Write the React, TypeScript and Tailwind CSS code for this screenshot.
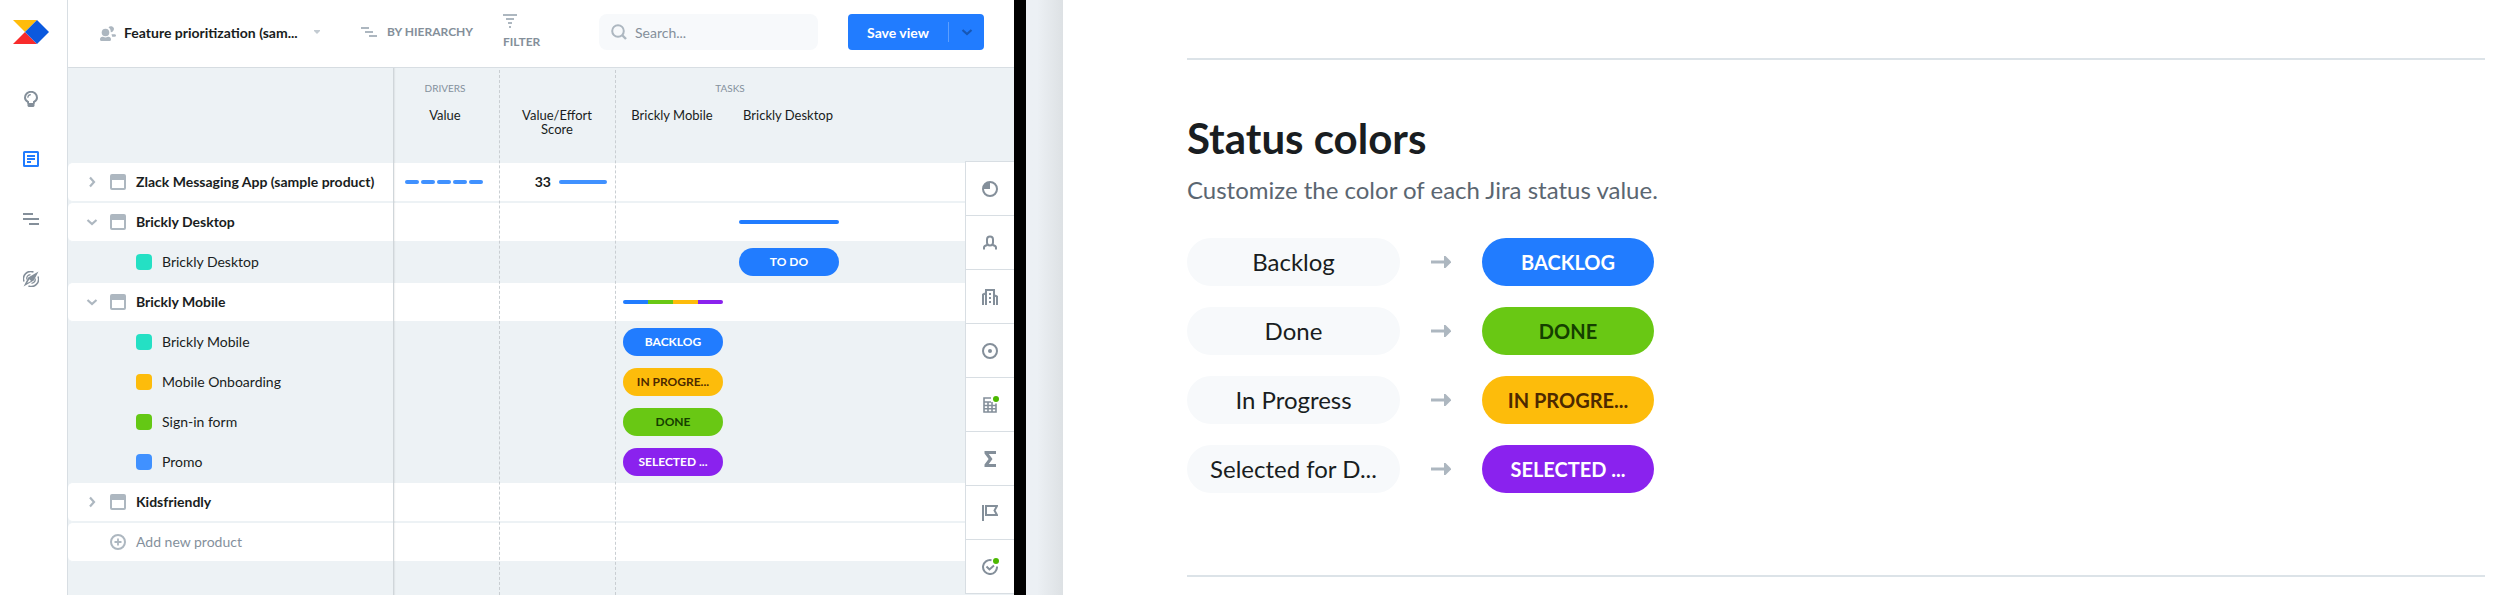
import type { ReactNode } from "react";
import clsx from "clsx";

interface Status {
  name: string;
  short: string;
  label: string;
  className: string;
}

interface Row {
  name: string;
  kind: "product" | "feature" | "add";
  open?: boolean;
  swatch?: string;
  value?: ReactNode;
  score?: ReactNode;
  mobile?: ReactNode;
  desktop?: ReactNode;
}

const statuses: Status[] = [
  { name: "Backlog", short: "Backlog", label: "BACKLOG", className: "bg-[#217cff] text-white" },
  { name: "Done", short: "Done", label: "DONE", className: "bg-[#69c814] text-[#153f00]" },
  { name: "In Progress", short: "In Progress", label: "IN PROGRE...", className: "bg-[#fdbc0b] text-[#4d2900]" },
  { name: "Selected for Development", short: "Selected for D...", label: "SELECTED ...", className: "bg-[#8a22ee] text-white" },
];

function Pill({ className, children }: { className: string; children: ReactNode }) {
  return (
    <button
      className={clsx(
        "block w-[100px] h-7 rounded-full text-[12px] leading-7 font-bold text-center whitespace-nowrap",
        className
      )}
    >
      {children}
    </button>
  );
}

function Progress({ colors }: { colors: string[] }) {
  return (
    <div className="flex w-[100px] h-1 rounded-full overflow-hidden">
      {colors.map((color) => (
        <span key={color} className={clsx("flex-1", color)} />
      ))}
    </div>
  );
}

const rows: Row[] = [
  {
    name: "Zlack Messaging App (sample product)",
    kind: "product",
    value: (
      <div className="flex gap-0.5 pl-[11px]">
        {[1, 2, 3, 4, 5].map((i) => (
          <span key={i} className="w-3.5 h-1 rounded-full bg-[#4091ff]" />
        ))}
      </div>
    ),
    score: (
      <div className="flex items-center justify-end gap-2 pr-[9px]">
        <span className="text-[14px] font-bold">33</span>
        <span className="w-12 h-1 rounded-full bg-[#4091ff]" />
      </div>
    ),
  },
  { name: "Brickly Desktop", kind: "product", open: true, desktop: <Progress colors={["bg-[#217cff]"]} /> },
  {
    name: "Brickly Desktop",
    kind: "feature",
    swatch: "bg-[#24e0c4]",
    desktop: <Pill className={statuses[0].className}>TO DO</Pill>,
  },
  {
    name: "Brickly Mobile",
    kind: "product",
    open: true,
    mobile: <Progress colors={["bg-[#217cff]", "bg-[#69c814]", "bg-[#fdbc0b]", "bg-[#8a22ee]"]} />,
  },
  {
    name: "Brickly Mobile",
    kind: "feature",
    swatch: "bg-[#24e0c4]",
    mobile: <Pill className={statuses[0].className}>BACKLOG</Pill>,
  },
  {
    name: "Mobile Onboarding",
    kind: "feature",
    swatch: "bg-[#fdbc0b]",
    mobile: <Pill className={statuses[2].className}>IN PROGRE...</Pill>,
  },
  {
    name: "Sign-in form",
    kind: "feature",
    swatch: "bg-[#64c814]",
    mobile: <Pill className={statuses[1].className}>DONE</Pill>,
  },
  {
    name: "Promo",
    kind: "feature",
    swatch: "bg-[#4091ff]",
    mobile: <Pill className={statuses[3].className}>SELECTED ...</Pill>,
  },
  { name: "Kidsfriendly", kind: "product" },
  { name: "Add new product", kind: "add" },
];

function Icon({ children, className }: { children: ReactNode; className?: string }) {
  return (
    <svg viewBox="0 0 16 16" fill="none" className={clsx("w-4 h-4 shrink-0", className)} aria-hidden="true">
      {children}
    </svg>
  );
}

const navItems = [
  {
    label: "Insights",
    active: false,
    icon: (
      <Icon>
        <path d="M5 12.5v-1.6C3 9.8 2 8.600 2 6.800a6 6 0 0 1 12 0c0 1.800-1 3-3 4.100v1.600" stroke="currentColor" strokeWidth="2" />
        <path d="M4.500 12h7v3l-1 1h-5l-1-1z" fill="currentColor" />
        <path d="M4.800 6.800c0-1.700 1.200-3 3-3.100" stroke="currentColor" strokeWidth="1.200" />
      </Icon>
    ),
  },
  {
    label: "Features",
    active: true,
    icon: (
      <Icon>
        <rect x="1" y="1" width="14" height="14" rx="0.500" stroke="currentColor" strokeWidth="2" />
        <path d="M4 5h8M4 8h8M4 11h4" stroke="currentColor" strokeWidth="1.800" />
      </Icon>
    ),
  },
  {
    label: "Roadmap",
    active: false,
    icon: (
      <Icon>
        <path d="M0 3h10M0 8h16M6 13h10" stroke="currentColor" strokeWidth="2" />
      </Icon>
    ),
  },
  {
    label: "Portal",
    active: false,
    icon: (
      <Icon>
        <path d="M1 10.500A7.300 7.300 0 0 1 10.500 1M15 5.500A7.300 7.300 0 0 1 5.500 15" stroke="currentColor" strokeWidth="1.500" />
        <path d="M3.700 8.500A4.500 4.500 0 0 1 7.500 3.700M12.300 7.500A4.500 4.500 0 0 1 8.500 12.300" stroke="currentColor" strokeWidth="1.200" />
        <path
          fillRule="evenodd"
          d="M15.500 0.500 10.800 9.500 0.600 15.500 5.200 6.400zM6.400 8.300 4.200 12 8 9.900z"
          fill="currentColor"
        />
      </Icon>
    ),
  },
];

const railItems = [
  {
    label: "Drivers",
    dot: false,
    icon: (
      <Icon>
        <circle cx="8" cy="8" r="7" stroke="currentColor" strokeWidth="2" />
        <path d="M8 8H1a7 7 0 0 1 7-7z" fill="currentColor" />
      </Icon>
    ),
  },
  {
    label: "Users",
    dot: false,
    icon: (
      <Icon>
        <rect x="5" y="1.500" width="6" height="9" rx="3" stroke="currentColor" strokeWidth="2" />
        <path d="M2 14.500v-2c0-1.200 1-2 3.500-2.500M14 14.500v-2c0-1.200-1-2-3.500-2.500" stroke="currentColor" strokeWidth="2" />
      </Icon>
    ),
  },
  {
    label: "Companies",
    dot: false,
    icon: (
      <Icon>
        <path d="M4 16V1h8v15M1 16V5.500l2-1M15 16V7.500l-2-1" stroke="currentColor" strokeWidth="2" />
        <path d="M7 4h2v2H7zM7 8h2v2H7zM7 12h2v2H7z" fill="currentColor" />
      </Icon>
    ),
  },
  {
    label: "Objectives",
    dot: false,
    icon: (
      <Icon>
        <circle cx="8" cy="8" r="7" stroke="currentColor" strokeWidth="2" />
        <circle cx="8" cy="8" r="2" fill="currentColor" />
      </Icon>
    ),
  },
  {
    label: "Effort",
    dot: true,
    icon: (
      <Icon>
        <path d="M9 1H2v14h12V6.500M2 5h7M2 8.500h12M2 11.800h12M6 5v10M10 5v10" stroke="currentColor" strokeWidth="1.600" />
      </Icon>
    ),
  },
  {
    label: "Formulas",
    dot: false,
    icon: (
      <Icon>
        <path d="M2.500 0h11.500v3H6.800l3.700 5-3.700 5H14v3H2.500v-2.400L6.600 8 2.500 2.400z" fill="currentColor" />
      </Icon>
    ),
  },
  {
    label: "Releases",
    dot: false,
    icon: (
      <Icon>
        <path d="M1 0v16" stroke="currentColor" strokeWidth="2" />
        <path d="M4 1h11L12.500 5.500 15 10H4z" stroke="currentColor" strokeWidth="2" />
      </Icon>
    ),
  },
  {
    label: "Tasks",
    dot: true,
    icon: (
      <Icon>
        <path d="M9.500 1.200A7 7 0 1 0 15 7.500" stroke="currentColor" strokeWidth="2" />
        <path d="m4.500 7.500 3 3L12 6.500" stroke="currentColor" strokeWidth="2" />
      </Icon>
    ),
  },
];

function Chevron({ open }: { open?: boolean }) {
  return (
    <Icon className="text-[#adb7c0]">
      {open ? (
        <path d="m3.500 6 4.500 4 4.500-4" stroke="currentColor" strokeWidth="2.200" />
      ) : (
        <path d="m6 3.500 4 4.500-4 4.500" stroke="currentColor" strokeWidth="2.200" />
      )}
    </Icon>
  );
}

function RowName({ row }: { row: Row }) {
  if (row.kind === "feature") {
    return (
      <div className="flex items-center gap-2.5 pl-[68px]">
        <span className={clsx("w-4 h-4 rounded", row.swatch)} />
        <span>{row.name}</span>
      </div>
    );
  }
  if (row.kind === "add") {
    return (
      <button className="flex items-center gap-2.5 pl-[42px] text-[#84909c]">
        <Icon className="text-[#adb7c0]">
          <circle cx="8" cy="8" r="7" stroke="currentColor" strokeWidth="2" />
          <path d="M8 4.500v7M4.500 8h7" stroke="currentColor" strokeWidth="1.800" />
        </Icon>
        {row.name}
      </button>
    );
  }
  return (
    <div className="flex items-center pl-4">
      <button aria-label={row.open ? "Collapse" : "Expand"}>
        <Chevron open={row.open} />
      </button>
      <Icon className="ml-2.5 mr-2.5 text-[#adb7c0]">
        <rect x="1" y="1" width="14" height="14" rx="1" stroke="currentColor" strokeWidth="2" />
        <path d="M1 1h14v5H1z" fill="currentColor" />
      </Icon>
      <span className="font-bold whitespace-nowrap">{row.name}</span>
    </div>
  );
}

function Sidebar() {
  return (
    <nav className="w-[68px] shrink-0 border-r border-[#d8dee3] pt-5 pr-[5px] flex flex-col items-center">
      <a href="#" aria-label="Home">
        <svg viewBox="0 0 36 24" className="w-9 h-6" aria-hidden="true">
          <path d="M0 0h24L12 12z" fill="#ffbc0b" />
          <path d="M0 24h24L12 12z" fill="#f82b2b" />
          <path d="M24 0 36 12 24 24 12 12z" fill="#0b59de" />
        </svg>
      </a>
      <div className="flex flex-col gap-11 mt-[47px]">
        {navItems.map((item) => (
          <a
            key={item.label}
            href="#"
            aria-label={item.label}
            className={item.active ? "text-[#217cff]" : "text-[#848f9a]"}
          >
            {item.icon}
          </a>
        ))}
      </div>
    </nav>
  );
}

function Toolbar() {
  return (
    <header className="h-[68px] border-b border-[#d8dee3] flex items-center pl-8 pr-[30px] pb-[3px]">
      <button className="w-[220px] flex items-center text-[14px] font-bold whitespace-nowrap">
        <Icon className="mr-2 mt-0.5 text-[#adb7c0]">
          <circle cx="5.500" cy="7.500" r="3.800" fill="currentColor" />
          <path d="M0 14.200c0-1.500 1-2.400 2.500-2.400.9 0 1.500.7 3 .7s2.100-.7 3-.7c1.500 0 2.500.9 2.500 2.400 0 1.200-.5 1.800-1.500 1.800h-8C.5 16 0 15.400 0 14.200z" fill="currentColor" />
          <path d="M8.500 2.200A3.300 3.300 0 0 1 14 3.500c0 2-1.200 3.700-3.200 3.700 0-2.400-.8-3.700-2.300-5z" fill="currentColor" />
          <path d="M11.500 9.200c1.500.4 4.500-.8 4.500 1.300 0 .8-.5 1.200-1.300 1.200h-2.500z" fill="currentColor" />
        </Icon>
        Feature prioritization (sam...
        <svg viewBox="0 0 6 4" className="w-1.5 h-1 ml-auto text-[#c3cbd2]" aria-hidden="true">
          <path d="M0 0h6v1L3 4 0 1z" fill="currentColor" />
        </svg>
      </button>
      <button className="w-28 ml-[41px] flex items-center gap-2.5 text-[12px] font-bold text-[#848f9a] whitespace-nowrap">
        <Icon className="text-[#adb7c0]">
          <path d="M0 4h8M4 8h8M8 12h8" stroke="currentColor" strokeWidth="1.800" />
        </Icon>
        BY HIERARCHY
      </button>
      <button className="w-[66px] ml-[30px] flex flex-col items-start gap-1.5 text-[12px] leading-4 font-bold text-[#848f9a]">
        <svg viewBox="0 0 14 14" className="w-3.5 h-3.5 text-[#adb7c0]" aria-hidden="true">
          <path d="M0 1h14M3 5h8M5 9h4M6 13h2" stroke="currentColor" strokeWidth="1.800" />
        </svg>
        FILTER
      </button>
      <label className="flex-1 min-w-0 h-9 ml-[30px] px-3 flex items-center gap-2 rounded-lg bg-[#f7f9fb]">
        <Icon className="text-[#adb7c0]">
          <circle cx="7" cy="7" r="5.800" stroke="currentColor" strokeWidth="2" />
          <path d="m11 11 4 4" stroke="currentColor" strokeWidth="2.400" />
        </Icon>
        <input
          type="text"
          aria-label="Search"
          placeholder="Search..."
          className="w-full min-w-0 bg-transparent text-[14px] outline-none placeholder:text-[#848f9a]"
        />
      </label>
      <div className="h-9 w-[136px] ml-[30px] flex items-center rounded bg-[#217cff] text-white">
        <button className="flex-1 text-[14px] font-bold whitespace-nowrap">Save view</button>
        <button className="w-9 h-5 border-l border-[#5c9fff] flex items-center justify-center text-[#1757b5]" aria-label="Save options">
          <Icon>
            <path d="m3.500 6 4.500 4 4.500-4" stroke="currentColor" strokeWidth="2.200" />
          </Icon>
        </button>
      </div>
    </header>
  );
}

function Board() {
  return (
    <div className="relative flex-1 bg-[#edf2f5]">
      <table className="w-full table-fixed border-separate border-spacing-0 text-[14px] leading-5">
        <colgroup>
          <col className="w-[326px]" />
          <col className="w-[106px]" />
          <col className="w-[116px]" />
          <col className="w-[116px]" />
          <col className="w-[116px]" />
          <col />
        </colgroup>
        <thead>
          <tr className="h-10 text-[10px] text-[#84909c]">
            <td className="p-0" />
            <th scope="colgroup" className="p-0 pr-1 font-normal">DRIVERS</th>
            <td className="p-0" />
            <th scope="colgroup" colSpan={2} className="p-0 pr-1 font-normal">TASKS</th>
            <td className="p-0" />
          </tr>
          <tr className="h-[54px] text-[13px] leading-3.5 align-top">
            <td className="p-0" />
            <th scope="col" className="p-0 pr-1 font-normal">Value</th>
            <th scope="col" className="py-0 pl-4 pr-4.5 font-normal">Value/Effort Score</th>
            <th scope="col" className="p-0 pr-1 font-normal">Brickly Mobile</th>
            <th scope="col" className="p-0 pr-1 font-normal">Brickly Desktop</th>
            <td className="p-0" />
          </tr>
        </thead>
        <tbody>
          {rows.map((row) => (
            <tr
              key={row.kind + row.name}
              className={clsx(
                "h-10 [&>*]:p-0 [&>*]:border-y [&>*]:border-[#edf2f5]",
                row.kind !== "feature" && "[&>*]:bg-white"
              )}
            >
              <th scope="row" className="rounded-l-[5px] text-left font-normal">
                <RowName row={row} />
              </th>
              <td>{row.value}</td>
              <td>{row.score}</td>
              <td>
                <div className="pl-[7px]">{row.mobile}</div>
              </td>
              <td>
                <div className="pl-[7px]">{row.desktop}</div>
              </td>
              <td />
            </tr>
          ))}
        </tbody>
      </table>

      {/* column rules run past the last row, down to the bottom of the board */}
      <div className="absolute inset-0 flex pointer-events-none">
        <div className="w-[326px] border-r border-[#d0d6da] shadow-[1px_0_1px_rgba(0,0,0,0.05)]" />
        <div className="w-[106px] mt-0.5 border-r border-dashed border-[#c9ced2]" />
        <div className="w-[116px] mt-0.5 border-r border-dashed border-[#c9ced2]" />
      </div>

      <aside className="absolute right-0 top-[93px] w-[49px] border-l border-t border-[#d8dee3] bg-white">
        {railItems.map((item) => (
          <button
            key={item.label}
            aria-label={item.label}
            className="w-full h-[54px] border-b border-[#d8dee3] flex items-center justify-center text-[#848f9a]"
          >
            <span className="relative">
              {item.icon}
              {item.dot && <span className="absolute -right-px -top-px w-1.5 h-1.5 rounded-full bg-[#4cb800] ring-1 ring-white" />}
            </span>
          </button>
        ))}
      </aside>
    </div>
  );
}

function StatusColors() {
  return (
    <section className="flex-1 min-w-0 bg-white pl-[124px] pr-3 pt-[58px]">
      <hr className="border-t-2 border-[#dce3e8]" />
      <h2 className="mt-[54px] text-[42px] leading-12 font-bold text-[#191d21]">Status colors</h2>
      <p className="mt-3 text-[24px] leading-8 text-[#5b6671]">Customize the color of each Jira status value.</p>
      <ul className="mt-8 flex flex-col gap-[21px]">
        {statuses.map((status) => (
          <li key={status.name} className="flex items-center">
            <span
              title={status.name}
              className="w-[213px] h-12 rounded-full bg-[#f7f9fb] text-[24px] leading-12 text-center whitespace-nowrap"
            >
              {status.short}
            </span>
            <svg viewBox="0 0 20 12" fill="none" className="w-5 h-3 mx-[31px] text-[#adb7c0]" aria-hidden="true">
              <path d="M0 6h14" stroke="currentColor" strokeWidth="3" />
              <path d="M13 0h1.500l6 6-6 6H13z" fill="currentColor" />
            </svg>
            <button
              className={clsx(
                "w-[172px] h-12 rounded-full text-[20px] font-bold text-center whitespace-nowrap",
                status.className
              )}
            >
              {status.label}
            </button>
          </li>
        ))}
      </ul>
      <hr className="mt-[82px] border-t-2 border-[#dce3e8]" />
    </section>
  );
}

export default function App() {
  return (
    <div className="min-h-screen flex bg-white font-[Lato,sans-serif] text-[#191d21]">
      <div className="w-[1014px] shrink-0 flex">
        <Sidebar />
        <main className="flex-1 min-w-0 flex flex-col">
          <Toolbar />
          <Board />
        </main>
      </div>
      <div className="w-3 shrink-0 bg-black" />
      <div className="w-[37px] shrink-0 bg-linear-to-r from-[#ecf0f4] from-30% to-[#dde1e4]" />
      <StatusColors />
    </div>
  );
}
